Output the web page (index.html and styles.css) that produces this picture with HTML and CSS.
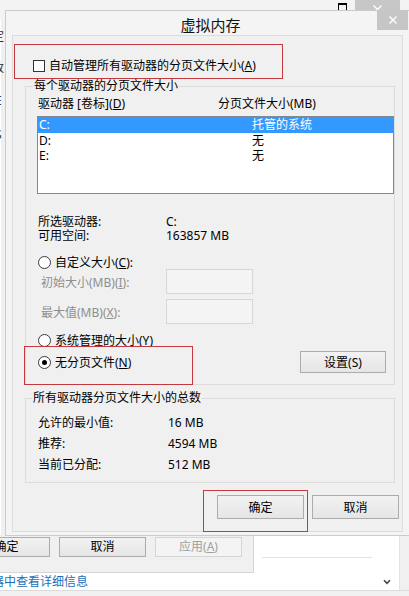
FILE: index.html
```html
<!DOCTYPE html>
<html lang="zh-CN">
<head>
<meta charset="utf-8">
<title>虚拟内存</title>
<link rel="stylesheet" href="styles.css">
</head>
<body>
<div class="bgwin">
  <div class="bg-top">
    <span class="bg-max"></span>
    <span class="bg-close"><svg width="9" height="9" viewBox="0 0 9 9"><path d="M0.5 0.5L8.5 8.5M8.5 0.5L0.5 8.5" stroke="#fff" stroke-width="1.3"/></svg></span>
  </div>
  <div class="bg-middle">
    <span class="frag f1">定</span>
    <span class="frag f2">改</span>
    <span class="frag f3">E</span>
    <span class="frag f4">S</span>
  </div>
  <div class="bg-bottom">
    <div class="bg-btnrow">
      <div class="bg-panel">
        <button class="bg-btn first">确定</button>
        <button class="bg-btn">取消</button>
        <button class="bg-btn disabled">应用(<u>A</u>)</button>
      </div>
      <div class="bg-white"><div class="bg-rule"></div></div>
    </div>
    <div class="bg-link-row">
      <span class="link">器中查看详细信息</span>
      <svg class="chev" width="8" height="6" viewBox="0 0 8 6"><path d="M1 1.2L4 4.4L7 1.2" fill="none" stroke="#444" stroke-width="1.6"/></svg>
    </div>
    <div class="bg-foot"></div>
  </div>
</div>

<div class="dialog">
  <div class="titlebar">
    <span class="title">虚拟内存</span>
    <span class="close"><svg width="8" height="8" viewBox="0 0 8 8"><path d="M0.5 0.5L7.5 7.5M7.5 0.5L0.5 7.5" stroke="#fff" stroke-width="1.4"/></svg></span>
  </div>
  <div class="client">
    <div class="auto"><span class="checkbox"></span>自动管理所有驱动器的分页文件大小(<u>A</u>)</div>

    <fieldset class="group g1">
      <legend>每个驱动器的分页文件大小</legend>
      <div class="cols"><span class="c1">驱动器 [卷标](<u>D</u>)</span><span>分页文件大小(MB)</span></div>
      <div class="listbox">
        <div class="row sel"><span class="c1">C:</span><span>托管的系统</span></div>
        <div class="row"><span class="c1">D:</span><span>无</span></div>
        <div class="row"><span class="c1">E:</span><span>无</span></div>
      </div>
      <div class="info">
        <span>所选驱动器:</span><span>C:</span>
        <span>可用空间:</span><span>163857 MB</span>
      </div>
      <div class="radio-row custom"><span class="radio"></span>自定义大小(<u>C</u>):</div>
      <div class="size-row"><span class="dis">初始大小(MB)(<u>I</u>):</span><span class="input"></span></div>
      <div class="size-row second"><span class="dis">最大值(MB)(<u>X</u>):</span><span class="input"></span></div>
      <div class="radio-row sys"><span class="radio"></span>系统管理的大小(<u>Y</u>)</div>
      <div class="radio-row nopage"><span class="radio on"></span>无分页文件(<u>N</u>)<button class="btn set">设置(S)</button></div>
    </fieldset>

    <fieldset class="group g2">
      <legend>所有驱动器分页文件大小的总数</legend>
      <div class="totals">
        <span>允许的最小值:</span><span>16 MB</span>
        <span>推荐:</span><span>4594 MB</span>
        <span>当前已分配:</span><span>512 MB</span>
      </div>
    </fieldset>

    <div class="actions">
      <button class="btn">确定</button>
      <button class="btn">取消</button>
    </div>
  </div>
</div>

<div class="mark m1"></div>
<div class="mark m2"></div>
<div class="mark m3"></div>
</body>
</html>
```

FILE: styles.css
```css
* { box-sizing: border-box; }
html, body { margin: 0; padding: 0; }
body {
  width: 409px;
  height: 596px;
  overflow: hidden;
  position: relative;
  background: #f0f0f0;
  font-family: "Noto Sans", "Noto Sans CJK SC", sans-serif;
  font-size: 12px;
  color: #000;
}
u { text-underline-offset: 1px; }

/* ---------- background window ---------- */
.bgwin {
  height: 596px;
  display: flex;
  flex-direction: column;
}
.bg-top {
  height: 20px;
  display: flex;
  justify-content: flex-end;
  align-items: flex-start;
  padding-right: 9px;
  background: #f3f3f3;
}
.bg-max {
  width: 9px;
  height: 9px;
  margin-top: 3px;
  margin-right: 8px;
  border: 1px solid #000;
  border-top-width: 2px;
}
.bg-close {
  width: 45px;
  height: 18px;
  background: #c7c7c7;
  display: flex;
  align-items: center;
  justify-content: center;
}
.bg-middle {
  flex: 1;
  display: flex;
  flex-direction: column;
  border-left: 1px solid #fff;
}
.frag {
  display: block;
  margin-left: -9px;
  height: 16px;
  line-height: 16px;
  color: #333;
}
.f1 { margin-top: 9px; }
.f2 { margin-top: 15px; }
.f3 { margin-top: 17px; margin-left: -6px; }
.f4 { margin-top: 18px; margin-left: -6px; }

.bg-bottom {
  height: 61px;
  display: flex;
  flex-direction: column;
}
.bg-btnrow {
  height: 38px;
  display: flex;
}
.bg-panel {
  width: 254px;
  background: #f0f0f0;
  border-right: 1px solid #d6d6d6;
  border-bottom: 1px solid #d6d6d6;
  display: flex;
  align-items: flex-start;
  gap: 9px;
  padding-top: 2px;
  overflow: hidden;
}
.bg-btn {
  flex: none;
  width: 87px;
  height: 20px;
  padding: 0;
  border: 1px solid #acacac;
  background: linear-gradient(#f2f2f2, #e5e5e5);
  font: inherit;
  line-height: 18px;
  color: #000;
}
.bg-btn.first { margin-left: -37px; }
.bg-btn.disabled {
  color: #a0a0a0;
  border-color: #d5d5d5;
  background: #f4f4f4;
}
.bg-white {
  flex: 1;
  background: #fff;
  border-right: 1px solid #e3e3e3;
  margin-right: 9px;
  padding-top: 22px;
}
.bg-rule {
  margin-left: 8px;
  width: 110px;
  height: 1px;
  background: #e2e2e2;
}
.bg-link-row {
  height: 17px;
  background: #fff;
  display: flex;
  align-items: center;
  border-right: 1px solid #e3e3e3;
  margin-right: 9px;
  overflow: hidden;
}
.link {
  margin-left: -8px;
  color: #1d6fb8;
  line-height: 17px;
  white-space: nowrap;
}
.chev {
  margin-left: auto;
  margin-right: 8px;
}
.bg-foot {
  flex: 1;
  border-top: 1px solid #dcdcdc;
  background: #f0f0f0;
}

/* ---------- dialog ---------- */
.dialog {
  position: absolute;
  left: 5px;
  top: 10px;
  width: 405px;
  height: 526px;
  background: #f4f4f4;
  border: 1px solid #cbcbcb;
  display: flex;
  flex-direction: column;
}
.titlebar {
  position: relative;
  height: 24px;
  flex: none;
  padding-left: 6px;
}
.title {
  display: block;
  text-align: center;
  font-size: 15px;
  line-height: 20px;
  padding-top: 4px;
  color: #111;
}
.close {
  position: absolute;
  top: -1px;
  right: 1px;
  width: 31px;
  height: 20px;
  background: #c6c6c6;
  display: flex;
  align-items: center;
  justify-content: center;
}
.client {
  margin: 0 6px;
  height: 497px;
  flex: none;
  background: #f0f0f0;
  border: 1px solid #dcdcdc;
  padding-top: 22px;
  display: flex;
  flex-direction: column;
}
.auto {
  height: 16px;
  line-height: 16px;
  display: flex;
  align-items: center;
  padding-left: 20px;
  white-space: nowrap;
}
.checkbox {
  width: 12px;
  height: 12px;
  border: 1px solid #333;
  background: #fff;
  margin-right: 4px;
}

.group {
  margin: 0 7px 0 12px;
  padding: 0;
  border: 1px solid #dcdcdc;
  min-width: 0;
}
.group legend {
  padding: 0 1px;
  margin-left: 7px;
  line-height: 16px;
  height: 16px;
}
.g1 { margin-top: 4px; padding-bottom: 11px; }
.g2 { margin-top: 5px; padding-bottom: 7px; }
.g2 legend { margin-left: 6px; }

.cols {
  display: flex;
  height: 16px;
  line-height: 16px;
  margin-top: 2px;
  padding-left: 12px;
  white-space: nowrap;
}
.cols .c1 { width: 180px; }

.listbox {
  margin: 4px 0 0 11px;
  width: 357px;
  height: 78px;
  border: 1px solid #828790;
  background: #fff;
}
.row {
  display: flex;
  height: 15.5px;
  line-height: 15.5px;
  padding-left: 1px;
}
.row .c1 { width: 213px; }
.row.sel { background: #3399ff; color: #fff; }

.info {
  display: grid;
  grid-template-columns: 128px auto;
  margin-top: 21px;
  padding-left: 12px;
  line-height: 14px;
}

.radio-row {
  display: flex;
  align-items: center;
  padding-left: 12px;
  height: 14px;
  white-space: nowrap;
}
.radio {
  width: 13px;
  height: 13px;
  border-radius: 50%;
  border: 1px solid #3a3a3a;
  background: #fff;
  margin-right: 4px;
  display: flex;
  align-items: center;
  justify-content: center;
}
.radio.on::after {
  content: "";
  width: 5px;
  height: 5px;
  border-radius: 50%;
  background: #000;
}
.custom { margin-top: 12px; }
.sys { margin-top: 9px; }
.nopage { margin-top: 4px; height: 22px; }

.size-row {
  display: grid;
  grid-template-columns: 128px 87px;
  align-items: center;
  height: 25px;
  padding-left: 12px;
}
.size-row.second { margin-top: 5px; }
.dis { color: #8e8e8e; padding-left: 3px; }
.input {
  height: 25px;
  border: 1px solid #d7d7d7;
  background: #f4f4f4;
}

.btn {
  width: 87px;
  height: 24px;
  padding: 0;
  border: 1px solid #acacac;
  background: linear-gradient(#f2f2f2, #e5e5e5);
  font: inherit;
  color: #000;
}
.btn.set {
  width: 86px;
  height: 22px;
  margin-left: auto;
  margin-right: 8px;
}

.totals {
  display: grid;
  grid-template-columns: 130px auto;
  margin-top: 6px;
  padding-left: 12px;
  line-height: 21px;
}

.actions {
  display: flex;
  gap: 8px;
  margin-top: 12px;
  padding-left: 204px;
}

/* ---------- red annotation boxes ---------- */
.mark {
  position: absolute;
  border: 1px solid #c4393f;
}
.m1 { left: 14px; top: 44px; width: 269px; height: 35px; }
.m2 { left: 24px; top: 346px; width: 169px; height: 39px; }
.m3 { left: 203px; top: 490px; width: 105px; height: 42px; }
```
